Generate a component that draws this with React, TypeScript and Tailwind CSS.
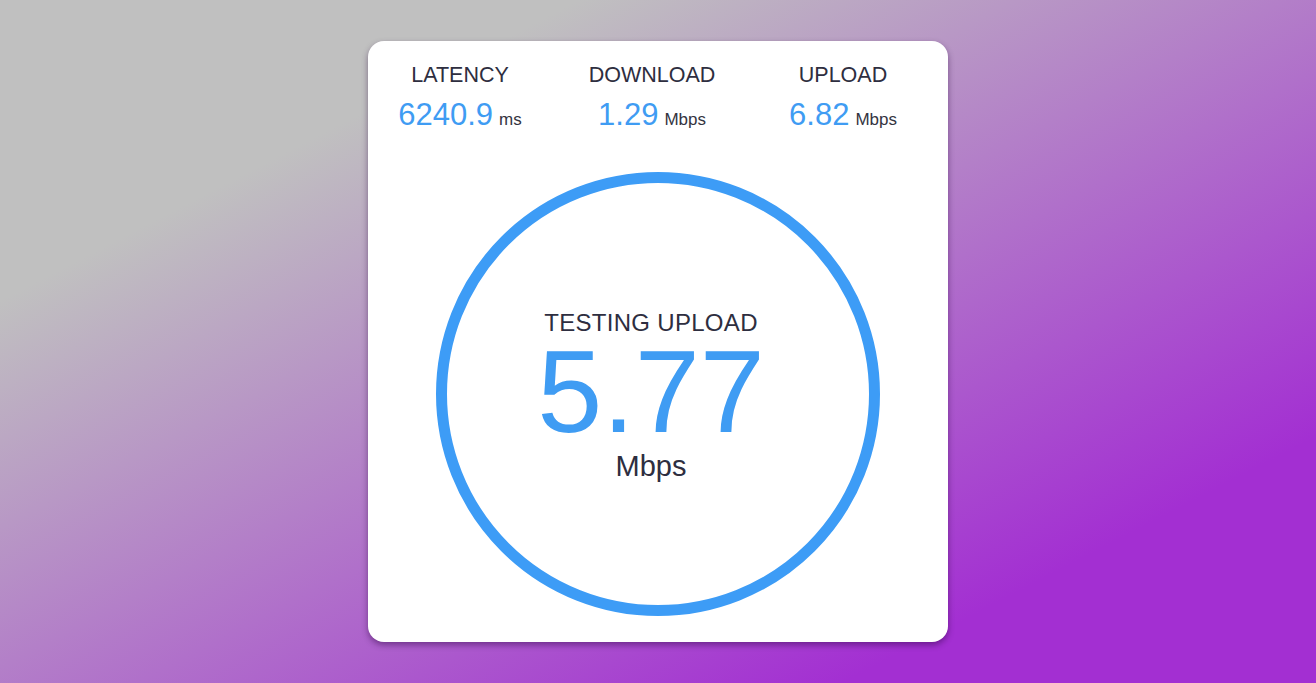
const STATS = [
  { label: "LATENCY", value: "6240.9", unit: "ms" },
  { label: "DOWNLOAD", value: "1.29", unit: "Mbps" },
  { label: "UPLOAD", value: "6.82", unit: "Mbps" },
];

export default function App() {
  return (
    <div
      className="w-full h-[683px] flex items-center justify-center bg-[linear-gradient(to_bottom_right,#c0c0c0_22%,#a32fd2_82%)]"
      style={{ fontFamily: '"Liberation Sans", Arial, sans-serif' }}
    >
      <div className="w-[580px] h-[601px] bg-white rounded-[16px] shadow-[0_3px_6px_rgba(40,0,60,0.45)] flex flex-col pt-[22px]">
        {/* stats row */}
        <div className="grid grid-cols-[184px_200px_182px]">
          {STATS.map((s) => (
            <div key={s.label} className="flex flex-col items-center">
              <span className="text-[21.5px] leading-[25px] text-[#2e2e40]">{s.label}</span>
              <div className="mt-[12px] flex items-baseline leading-[30px]">
                <span className="text-[31px] text-[#3f9cf3]">{s.value}</span>
                <span className="ml-[6px] text-[17px] text-[#34343f]">{s.unit}</span>
              </div>
            </div>
          ))}
        </div>

        {/* gauge */}
        <div className="mt-[37px] mx-auto w-[444px] h-[444px] rounded-full border-[11px] border-[#3d9cf6] flex items-center justify-center">
          <div className="flex flex-col items-center pr-[14px] pt-[3px]">
            <span className="text-[24px] leading-[26px] tracking-[0.3px] text-[#2e2e40]">TESTING UPLOAD</span>
            <span className="mt-[4px] text-[117px] leading-[104px] text-[#3f9cf3]">5.77</span>
            <span className="mt-[6px] text-[29px] leading-[32px] text-[#2e2e40]">Mbps</span>
          </div>
        </div>
      </div>
    </div>
  );
}
